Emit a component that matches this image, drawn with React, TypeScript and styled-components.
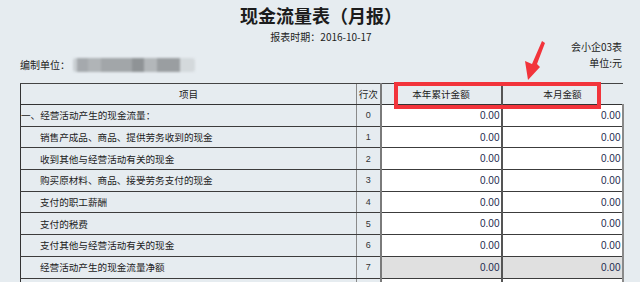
import React from "react";
import styled, { createGlobalStyle } from "styled-components";

const Global = createGlobalStyle`
  html, body { margin: 0; padding: 0; background: #e6ecf0; overflow: hidden; }
  body { font-family: "Noto Sans CJK SC", "Liberation Sans", sans-serif; color: #222; }
`;

const Page = styled.div`
  position: relative;
  width: 640px;
  height: 282px;
  overflow: hidden;
  padding: 4px 18px 0 20px;
  box-sizing: border-box;
`;

const Title = styled.h1`
  margin: 0;
  text-align: center;
  font-size: 18px;
  line-height: 22px;
  font-weight: 700;
  color: #1c1c1c;
`;

const DateLine = styled.div`
  margin-top: 4px;
  text-align: center;
  font-size: 10px;
  line-height: 14px;
  color: #222;
`;

const MetaRow = styled.div`
  display: flex;
  justify-content: space-between;
  align-items: flex-end;
  margin-top: -5px;
  height: 32px;
`;

const Compiler = styled.div`
  display: flex;
  align-items: center;
  gap: 3px;
  font-size: 10px;
  line-height: 14px;
  margin-bottom: -1px;
`;

const Blurred = styled.div`
  width: 122px;
  height: 14px;
  border-radius: 3px;
  filter: blur(1px);
  background: linear-gradient(
    90deg,
    #c9ced2 0 3%,
    #a5a9ad 3% 12%,
    #b0b4b7 12% 23%,
    #a2a6a9 23% 48%,
    #8f9396 48% 58%,
    #b3b7ba 58% 69%,
    #9a9ea1 69% 88%,
    #d4d9dc 88% 100%
  );
`;

const RightMeta = styled.div`
  display: flex;
  flex-direction: column;
  align-items: flex-end;
  font-size: 10px;
  line-height: 16px;
  align-self: flex-start;
`;

const Table = styled.table`
  margin-top: 12px;
  width: 602px;
  border-collapse: collapse;
  table-layout: fixed;
  font-size: 9.6px;
`;

const HeadCell = styled.th<{ $edge?: string }>`
  height: 20px;
  padding: 0;
  font-weight: 400;
  text-align: center;
  background: #e6ecf0;
  border-top: 1px solid #444;
  border-bottom: 1px solid #333;
  border-left: ${(p) => p.$edge || "1px solid #888"};
  color: #222;
`;

const ItemCell = styled.td<{ $indent?: boolean }>`
  height: 20.7px;
  padding: 0 0 0 ${(p) => (p.$indent ? "19px" : "0")};
  white-space: nowrap;
  overflow: hidden;
  background: #e6ecf0;
  border-left: 1px solid #333;
  border-bottom: 1px solid #3c3c3c;
  color: #222;
`;

const NoCell = styled.td`
  padding: 0;
  text-align: center;
  font-family: "Liberation Sans", sans-serif;
  font-size: 9px;
  background: #e6ecf0;
  border-left: 1px solid #8a8a8a;
  border-bottom: 1px solid #3c3c3c;
  color: #333;
`;

const AmountCell = styled.td<{ $gray?: boolean; $last?: boolean }>`
  padding: 0 1px 0 0;
  text-align: right;
  font-family: "Liberation Sans", sans-serif;
  font-size: 10px;
  color: #1c2a4e;
  background: ${(p) => (p.$gray ? "#e0e0e0" : "#ffffff")};
  border-left: 2px solid ${(p) => (p.$last ? "#555" : "#7a7a7a")};
  border-right: ${(p) => (p.$last ? "2px solid #8a8a8a" : "none")};
  border-bottom: 1px solid #3c3c3c;
`;

const Highlight = styled.div`
  position: absolute;
  left: 394px;
  top: 82px;
  width: 207px;
  height: 27px;
  border: 4px solid #f2343b;
  box-sizing: border-box;
  pointer-events: none;
`;

const Arrow = styled.svg`
  position: absolute;
  left: 520px;
  top: 38px;
  width: 30px;
  height: 46px;
  pointer-events: none;
`;

type Row = { label: string; no: string; indent: boolean; gray?: boolean };

const rows: Row[] = [
  { label: "一、经营活动产生的现金流量：", no: "0", indent: false },
  { label: "销售产成品、商品、提供劳务收到的现金", no: "1", indent: true },
  { label: "收到其他与经营活动有关的现金", no: "2", indent: true },
  { label: "购买原材料、商品、接受劳务支付的现金", no: "3", indent: true },
  { label: "支付的职工薪酬", no: "4", indent: true },
  { label: "支付的税费", no: "5", indent: true },
  { label: "支付其他与经营活动有关的现金", no: "6", indent: true },
  { label: "经营活动产生的现金流量净额", no: "7", indent: true, gray: true },
];

export default function App() {
  return (
    <Page>
      <Global />
      <Title>现金流量表（月报）</Title>
      <DateLine>报表时期：2016-10-17</DateLine>
      <MetaRow>
        <Compiler>
          <span>编制单位：</span>
          <Blurred />
        </Compiler>
        <RightMeta>
          <span>会小企03表</span>
          <span>单位:元</span>
        </RightMeta>
      </MetaRow>
      <Table>
        <colgroup>
          <col style={{ width: 336 }} />
          <col style={{ width: 24 }} />
          <col style={{ width: 121 }} />
          <col style={{ width: 121 }} />
        </colgroup>
        <thead>
          <tr>
            <HeadCell $edge="1px solid #333">项目</HeadCell>
            <HeadCell>行次</HeadCell>
            <HeadCell $edge="2px solid #7a7a7a">本年累计金额</HeadCell>
            <HeadCell $edge="2px solid #555">本月金额</HeadCell>
          </tr>
        </thead>
        <tbody>
          {rows.map((r) => (
            <tr key={r.no}>
              <ItemCell $indent={r.indent}>{r.label}</ItemCell>
              <NoCell>{r.no}</NoCell>
              <AmountCell $gray={r.gray}>0.00</AmountCell>
              <AmountCell $gray={r.gray} $last>
                0.00
              </AmountCell>
            </tr>
          ))}
          <tr>
            <ItemCell />
            <NoCell />
            <AmountCell />
            <AmountCell $last />
          </tr>
        </tbody>
      </Table>
      <Highlight />
      <Arrow viewBox="520 38 30 46">
        <polygon
          points="542,41 545,43 537,64 540,67 528,80 525,61 532,64"
          fill="#f2343b"
        />
      </Arrow>
    </Page>
  );
}
